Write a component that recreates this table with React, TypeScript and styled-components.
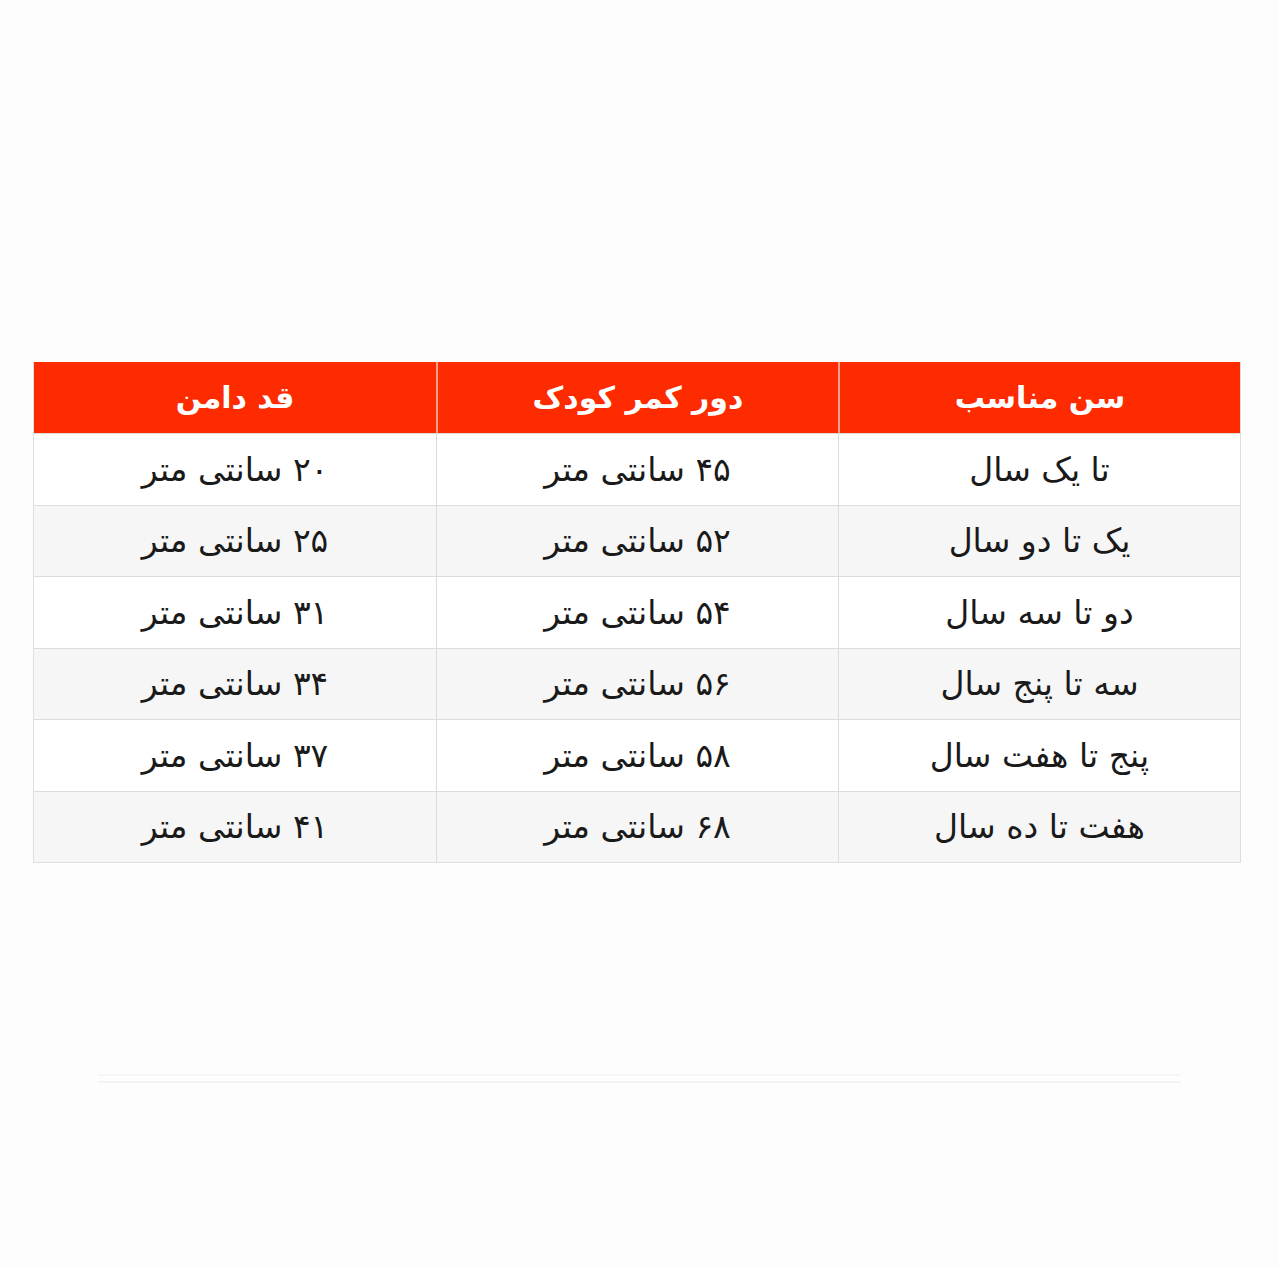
import styled, { createGlobalStyle } from 'styled-components'

const GlobalStyle = createGlobalStyle`
  html, body {
    margin: 0;
    padding: 0;
    background: #fdfdfd;
  }
`

const Page = styled.div`
  width: 1278px;
  height: 1268px;
  box-sizing: border-box;
  padding: 362px 37px 0 33px;
  display: flex;
  flex-direction: column;
  font-family: "DejaVu Sans", sans-serif;
`

const Table = styled.div`
  direction: rtl;
  display: grid;
  grid-template-columns: repeat(3, 1fr);
  border: 1px solid #dedede;
  border-top: none;
  background: #fff;
`

const HeadCell = styled.div`
  height: 71px;
  display: flex;
  align-items: center;
  justify-content: center;
  background: #fe2a00;
  color: #fff;
  font-weight: 700;
  font-size: 30px;
  border-left: 2px solid #f7a08c;
  &:nth-child(3) {
    border-left: none;
  }
`

const Cell = styled.div<{ $shade: boolean }>`
  height: 70.5px;
  display: flex;
  align-items: center;
  justify-content: center;
  background: ${(p) => (p.$shade ? '#f6f6f6' : '#ffffff')};
  color: #1a1a1a;
  font-size: 33px;
  border-top: 1px solid #dcdcdc;
  border-left: 1px solid #dcdcdc;
  &:nth-child(3n) {
    border-left: none;
  }
`

const Shelf = styled.div`
  margin: 211px 60px 0 65px;
  height: 5px;
  border-top: 2px solid #f6f6f6;
  border-bottom: 2px solid #f4f4f4;
`

const headers = ['سن مناسب', 'دور کمر کودک', 'قد دامن']

const rows = [
  ['تا یک سال', '۴۵ سانتی متر', '۲۰ سانتی متر'],
  ['یک تا دو سال', '۵۲ سانتی متر', '۲۵ سانتی متر'],
  ['دو تا سه سال', '۵۴ سانتی متر', '۳۱ سانتی متر'],
  ['سه تا پنج سال', '۵۶ سانتی متر', '۳۴ سانتی متر'],
  ['پنج تا هفت سال', '۵۸ سانتی متر', '۳۷ سانتی متر'],
  ['هفت تا ده سال', '۶۸ سانتی متر', '۴۱ سانتی متر'],
]

export default function App() {
  return (
    <>
      <GlobalStyle />
      <Page>
        <Table>
          {headers.map((h) => (
            <HeadCell key={h}>{h}</HeadCell>
          ))}
          {rows.map((row, i) =>
            row.map((c, j) => (
              <Cell key={`${i}-${j}`} $shade={i % 2 === 1}>
                {c}
              </Cell>
            ))
          )}
        </Table>
        <Shelf />
      </Page>
    </>
  )
}
